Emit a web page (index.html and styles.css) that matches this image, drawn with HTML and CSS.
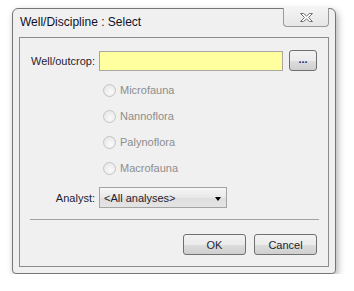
FILE: index.html
```html
<!DOCTYPE html>
<html lang="en">
<head>
  <meta charset="UTF-8" />
  <title>Well/Discipline : Select</title>
  <link rel="stylesheet" href="styles.css">
</head>
<body>
  <div class="window">
    <div class="titlebar">
      <span class="title">Well/Discipline : Select</span>
      <div class="close">
        <svg width="13" height="9" viewBox="0 0 13 9">
          <polygon points="0.5,0.5 3.5,0.5 6.5,3 9.5,0.5 12.5,0.5 8.5,4.5 12.5,8.5 9.5,8.5 6.5,6 3.5,8.5 0.5,8.5 4.5,4.5" fill="#fdfdfd" stroke="#707070" stroke-width="1" stroke-linejoin="round"/>
        </svg>
      </div>
    </div>
    <div class="panel">
      <div class="row">
        <label class="lbl">Well/outcrop:</label>
        <input class="well" type="text" />
        <button class="btn dots"><span>...</span></button>
      </div>
      <div class="radios">
        <div class="radio"><span class="circle"></span>Microfauna</div>
        <div class="radio"><span class="circle"></span>Nannoflora</div>
        <div class="radio"><span class="circle"></span>Palynoflora</div>
        <div class="radio"><span class="circle"></span>Macrofauna</div>
      </div>
      <div class="row analyst">
        <label class="lbl">Analyst:</label>
        <div class="combo">
          <span>&lt;All analyses&gt;</span>
          <span class="arrow"></span>
        </div>
      </div>
      <div class="sep"></div>
      <div class="actions">
        <button class="btn">OK</button>
        <button class="btn">Cancel</button>
      </div>
    </div>
  </div>
</body>
</html>
```

FILE: styles.css
```css
body {
  margin: 0;
  padding: 8px 0 0 12px;
  background-color: #fff;
  font-family: "Liberation Sans", Arial, sans-serif;
  font-size: 11px;
  color: #1e1e32;
}
.window {
  width: 310px;
  padding: 0 6px 6px;
  border: 1px solid #767676;
  border-radius: 6px 6px 4px 4px;
  background-color: #f0f0f0;
  box-shadow: 2px 3px 7px rgba(0, 0, 0, 0.3);
}
.titlebar {
  height: 28px;
  display: flex;
  justify-content: space-between;
  align-items: flex-start;
}
.title {
  padding-left: 1px;
  margin-top: 6px;
  font-size: 12px;
  color: #101028;
}
.close {
  width: 44px;
  height: 18px;
  margin-top: -1px;
  border: 1px solid #9a9a9a;
  border-top: none;
  border-radius: 0 0 4px 4px;
  background: linear-gradient(#f4f4f4, #e6e6e6);
  display: flex;
  justify-content: center;
  align-items: center;
}
.panel {
  border: 1px solid #8c8c8c;
  padding: 12px 11px 11px 10px;
}
.row {
  display: flex;
  align-items: center;
  height: 21px;
}
.lbl {
  width: 65px;
  margin-right: 4px;
  text-align: right;
  white-space: nowrap;
}
.well {
  width: 184px;
  height: 20px;
  box-sizing: border-box;
  margin: 0 6px 0 0;
  border: 1px solid #a8a8a0;
  background-color: #ffffa0;
  padding: 0;
}
.btn {
  height: 21px;
  width: 63px;
  padding: 0;
  border: 1px solid #707070;
  border-radius: 3px;
  background: linear-gradient(#f2f2f2 0%, #ebebeb 50%, #dddddd 51%, #cfcfcf 100%);
  font-family: "Liberation Sans", Arial, sans-serif;
  font-size: 11px;
  color: #1e1e32;
}
.dots {
  width: 28px;
  color: #2a2a80;
  font-weight: bold;
}
.dots span {
  position: relative;
  top: -2px;
}
.radios {
  margin: 6px 0 6px 73px;
}
.radio {
  height: 26px;
  display: flex;
  align-items: center;
  color: #8d8d8d;
}
.circle {
  width: 11px;
  height: 11px;
  margin-right: 4px;
  border: 1px solid #c4c4c4;
  border-radius: 50%;
  background: radial-gradient(circle at 60% 65%, #fafafa, #e2e2e2);
}
.combo {
  width: 128px;
  height: 21px;
  box-sizing: border-box;
  border: 1px solid #a4a4a4;
  background: linear-gradient(#f6f6f6, #e8e8e8 50%, #dedede 51%, #e4e4e4);
  display: flex;
  align-items: center;
  justify-content: space-between;
  padding: 0 5px 0 4px;
}
.arrow {
  width: 0;
  height: 0;
  margin-top: 2px;
  border-left: 3.5px solid transparent;
  border-right: 3.5px solid transparent;
  border-top: 4px solid #000;
}
.sep {
  margin: 11px -2px 0 0;
  border-top: 1px solid #a0a0a0;
}
.actions {
  margin-top: 14px;
  display: flex;
  justify-content: flex-end;
  gap: 8px;
}
```
